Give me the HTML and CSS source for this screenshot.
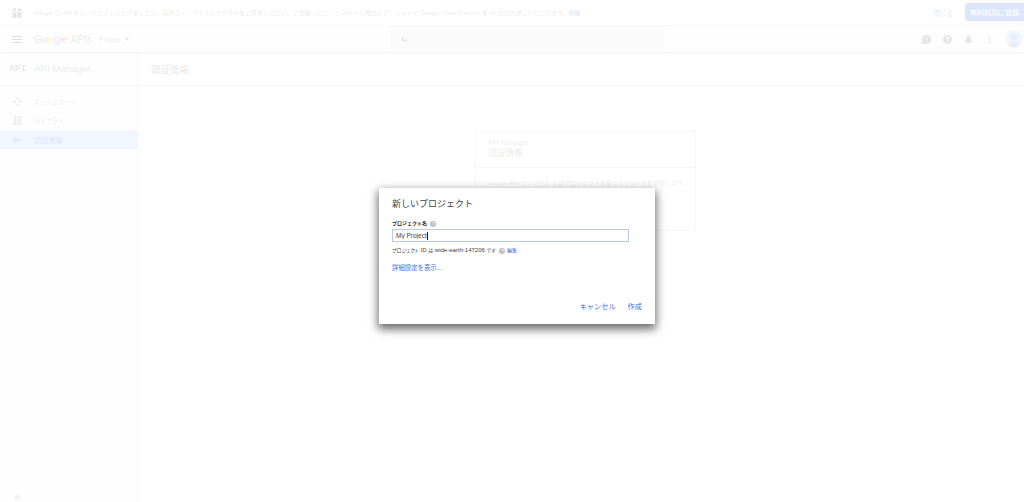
FILE: index.html
```html
<!DOCTYPE html>
<html lang="ja">
<head>
    <meta charset="UTF-8">
    <title>新しいプロジェクト</title>
    <link rel="stylesheet" href="styles.css">
</head>
<body>
    <div class="promo">
        <svg class="gift" viewBox="0 0 10 10" width="10" height="10"><path fill="#757575" d="M0 1.500h4.500V3H0zM5.500 1.500H10V3H5.500zM1.500 0h2.500v1.500H1.500zM6 0h2.500v1.500H6zM.5 4h4v6h-4zM5.500 4h4v6h-4z"/></svg>
        <p class="promo-text">Google の API を気に入っていただけましたら、実際のインフラストラクチャをご体験ください。ご登録いただくと 300 ドル相当のクレジットで Google Cloud Platform を 60 日間お試しいただけます。<a class="link" href="#">詳細</a></p>
        <a class="promo-close" href="#">閉じる</a>
        <button class="promo-btn">無料試用に登録</button>
    </div>

    <header class="topbar">
        <div class="burger"><span></span><span></span><span></span></div>
        <div class="logo"><span class="g-b">G</span><span class="g-r">o</span><span class="g-y">o</span><span class="g-b">g</span><span class="g-g">l</span><span class="g-r">e</span> <span class="logo-apis">APIs</span></div>
        <div class="project">Project <i class="caret"></i></div>
        <div class="search">
            <svg viewBox="0 0 24 24" width="9" height="9"><path fill="#757575" d="M15.500 14h-.8l-.3-.3A6.500 6.500 0 1 0 14 14.400l.3.3v.8l5 5 1.500-1.500zm-6 0a4.500 4.500 0 1 1 0-9 4.500 4.500 0 0 1 0 9z"/></svg>
        </div>
        <div class="top-icons">
            <svg viewBox="0 0 24 24" width="11" height="11"><path fill="#757575" d="M12 2a10 10 0 0 0-9 14l-1 6 6-1a10 10 0 1 0 4-19zm1 15h-2v-2h2zm0-4h-2V7h2z"/></svg>
            <svg viewBox="0 0 24 24" width="11" height="11"><path fill="#757575" d="M12 2a10 10 0 1 0 0 20 10 10 0 0 0 0-20zm1 17h-2v-2h2zm2-7-1 1c-.8.8-1 1.500-1 3h-2v-.5c0-1.100.4-2.100 1.200-2.800l1.200-1.300A2 2 0 1 0 10 9H8a4 4 0 1 1 7 3z"/></svg>
            <svg viewBox="0 0 24 24" width="11" height="11"><path fill="#757575" d="M12 22a2 2 0 0 0 2-2h-4a2 2 0 0 0 2 2zm6-6v-5c0-3-1.600-5.600-4.500-6.300V4a1.500 1.500 0 0 0-3 0v.7C7.600 5.400 6 8 6 11v5l-2 2v1h16v-1z"/></svg>
            <svg viewBox="0 0 24 24" width="11" height="11"><path fill="#757575" d="M12 8a2 2 0 1 0 0-4 2 2 0 0 0 0 4zm0 2a2 2 0 1 0 0 4 2 2 0 0 0 0-4zm0 6a2 2 0 1 0 0 4 2 2 0 0 0 0-4z"/></svg>
            <svg class="avatar" viewBox="0 0 18 18" width="18" height="18"><circle cx="9" cy="9" r="9" fill="#b7cdf9"/><circle cx="9" cy="7" r="3.400" fill="#7f9fe0"/><path fill="#7f9fe0" d="M3 15c1-3 3.500-3.800 6-3.800s5 .8 6 3.800a9 9 0 0 1-12 0z"/></svg>
        </div>
    </header>

    <div class="main">
        <aside class="sidebar">
            <div class="side-head"><span class="api-mark">API</span><span class="side-title">API Manager</span></div>
            <nav class="side-nav">
                <a class="nav-item" href="#">
                    <svg viewBox="0 0 12 12" width="9" height="9"><path fill="#8a8a8a" d="M6 0l2 2-2 2-2-2zM2 4l2 2-2 2-2-2zM10 4l2 2-2 2-2-2zM6 8l2 2-2 2-2-2z"/></svg>
                    ダッシュボード
                </a>
                <a class="nav-item" href="#">
                    <svg viewBox="0 0 12 12" width="9" height="9"><path fill="#8a8a8a" d="M1 0h3v3H1zM5 0h2v3H5zM8 0h3v3H8zM1 4h3v3H1zM5 4h2v3H5zM8 4h3v3H8zM1 8h3v4H1zM5 8h2v4H5zM8 8h3v4H8z"/></svg>
                    ライブラリ
                </a>
                <a class="nav-item nav-active" href="#">
                    <svg viewBox="0 0 12 12" width="9" height="9"><path fill="#3f74e0" d="M3 3a3 3 0 1 0 2.800 4H8v1.500h1.500V7H11V5H5.800A3 3 0 0 0 3 3zm0 2a1 1 0 1 1 0 2 1 1 0 0 1 0-2z"/></svg>
                    認証情報
                </a>
            </nav>
            <div class="collapse">
                <svg viewBox="0 0 6 6" width="6" height="6"><path fill="#9e9e9e" d="M3.500 0v6L0 3zM4.500 0H6v6H4.500z"/></svg>
            </div>
        </aside>

        <main class="content">
            <h1 class="page-title">認証情報</h1>
            <div class="content-body">
                <div class="card">
                    <div class="card-head">
                        <div class="card-sub">API Manager</div>
                        <div class="card-title">認証情報</div>
                    </div>
                    <p class="card-text">Google API コンソール ではプロジェクトを使ってリソースを管理します。</p>
                </div>
            </div>
        </main>
    </div>

    <div class="scrim">
        <div class="dialog">
            <h2 class="dialog-title">新しいプロジェクト</h2>
            <label class="field-label" for="projectName">プロジェクト名 <i class="help">?</i></label>
            <div class="input-wrap">
                <input class="field-input" id="projectName" type="text" value="My Project">
                <span class="text-caret"></span>
            </div>
            <div class="project-id"><span class="ja">プロジェクト</span> ID <span class="ja">は</span> wide-earth-147206 <span class="ja">です</span> <i class="help">?</i> <a class="edit-link" href="#">編集</a></div>
            <a class="advanced" href="#">詳細設定を表示...</a>
            <div class="dialog-actions">
                <a class="action" href="#">キャンセル</a>
                <a class="action" href="#">作成</a>
            </div>
        </div>
    </div>
</body>
</html>
```

FILE: styles.css
```css
* {
    box-sizing: border-box;
}
html, body {
    height: 100%;
}
body {
    margin: 0;
    overflow: hidden;
    font-family: "Liberation Sans", "Noto Sans CJK JP", sans-serif;
    background-color: #fff;
    color: #424242;
    display: flex;
    flex-direction: column;
}
a {
    text-decoration: none;
}
.link {
    color: #3367d6;
}

.promo {
    height: 26px;
    display: flex;
    align-items: center;
    padding-left: 12px;
    font-size: 5.950px;
    border-bottom: 1px solid #e0e0e0;
}
.promo-text {
    margin: 0 0 0 12px;
    flex: 1;
    white-space: nowrap;
    color: #8a8a8a;
}
.promo-close {
    color: #3f74e0;
    font-size: 6.500px;
    margin-right: 12px;
}
.promo-btn {
    width: 59px;
    height: 18px;
    margin-top: -1px;
    padding: 0;
    border: none;
    border-radius: 2px 0 0 2px;
    background-color: #3f74e0;
    color: #fff;
    font-family: inherit;
    font-size: 7px;
}

.topbar {
    height: 26px;
    display: flex;
    align-items: center;
    padding-left: 12px;
    background-color: #fafafa;
    box-shadow: 0 1px 2px rgba(0, 0, 0, .3);
    position: relative;
}
.burger {
    width: 10px;
    display: flex;
    flex-direction: column;
    gap: 2px;
}
.burger span {
    height: 1px;
    background-color: #424242;
}
.logo {
    margin-left: 12px;
    font-size: 10.500px;
    width: 56px;
    white-space: nowrap;
}
.g-b { color: #4285f4; }
.g-r { color: #ea4335; }
.g-y { color: #fbbc05; }
.g-g { color: #34a853; }
.logo-apis {
    color: #8a8a8a;
}
.project {
    margin-left: 9px;
    width: 122px;
    font-size: 7px;
    color: #8a8a8a;
}
.caret {
    display: inline-block;
    margin-left: 2px;
    vertical-align: middle;
    border-left: 2.500px solid transparent;
    border-right: 2.500px solid transparent;
    border-top: 3px solid #757575;
}
.search {
    width: 275px;
    height: 19px;
    margin-left: 169px;
    display: flex;
    align-items: center;
    padding-left: 11px;
    background-color: #e3e3e3;
}
.top-icons {
    margin-left: auto;
    display: flex;
    align-items: center;
    gap: 10px;
    padding-right: 1px;
}

.main {
    flex: 1;
    display: flex;
    min-height: 0;
}
.sidebar {
    width: 138px;
    background-color: #fafafa;
    border-right: 1px solid #d0d0d0;
    display: flex;
    flex-direction: column;
}
.side-head {
    height: 34px;
    display: flex;
    align-items: center;
    padding-left: 9px;
    border-bottom: 1px solid #d0d0d0;
}
.api-mark {
    width: 25px;
    font-family: "Liberation Mono", monospace;
    font-size: 9.500px;
    font-weight: bold;
    color: #757575;
}
.side-title {
    font-size: 9.700px;
    color: #8a8a8a;
}
.side-nav {
    margin-top: 6px;
}
.nav-item {
    height: 19px;
    display: flex;
    align-items: center;
    gap: 12px;
    padding-left: 13px;
    font-size: 6px;
    color: #8a8a8a;
}
.nav-active {
    background-color: #b7cdf9;
    color: #3f74e0;
    font-size: 7.200px;
}
.collapse {
    margin-top: auto;
    padding: 0 0 2px 14px;
    line-height: 6px;
}

.content {
    flex: 1;
    display: flex;
    flex-direction: column;
}
.page-title {
    height: 34px;
    margin: 0;
    display: flex;
    align-items: center;
    padding-left: 13px;
    font-size: 9.500px;
    font-weight: normal;
    color: #757575;
    border-bottom: 1px solid #d0d0d0;
}
.content-body {
    flex: 1;
    padding: 45px 0 0 337px;
}
.card {
    width: 221px;
    height: 100px;
    border: 1px solid #d0d0d0;
}
.card-head {
    height: 36px;
    padding: 7px 12px 0;
    border-bottom: 1px solid #d0d0d0;
}
.card-sub {
    font-size: 7px;
    color: #9e9e9e;
}
.card-title {
    font-size: 8.800px;
    color: #8a8a8a;
}
.card-text {
    margin: 10px 12px 0;
    font-size: 6px;
    white-space: nowrap;
    color: #9e9e9e;
}

.scrim {
    position: absolute;
    top: 0;
    left: 0;
    width: 100%;
    height: 100%;
    background-color: rgba(255, 255, 255, .82);
}
.dialog {
    position: absolute;
    left: 379px;
    top: 188px;
    width: 276px;
    height: 136px;
    padding: 9px 13px 12px;
    display: flex;
    flex-direction: column;
    background-color: #fff;
    box-shadow: 0 4px 9px 1px rgba(0, 0, 0, .6);
}
.dialog-title {
    margin: 0;
    font-size: 9px;
    line-height: 15px;
    font-weight: normal;
    color: #424242;
}
.field-label {
    margin-top: 7px;
    font-size: 5px;
    line-height: 8px;
    font-weight: bold;
    color: #212121;
}
.help {
    display: inline-block;
    width: 6px;
    height: 6px;
    margin-left: 2px;
    border-radius: 50%;
    background-color: #bdbdbd;
    color: #fff;
    font-family: "Liberation Sans", sans-serif;
    font-size: 5px;
    line-height: 6px;
    font-style: normal;
    font-weight: normal;
    text-align: center;
    vertical-align: -1px;
}
.input-wrap {
    position: relative;
    margin-top: 2px;
}
.field-input {
    display: block;
    width: 237px;
    height: 13px;
    padding: 0 3px;
    border: 1px solid #b9c9ea;
    outline: none;
    border-radius: 0;
    font-family: inherit;
    font-size: 6.500px;
    color: #424242;
}
.text-caret {
    position: absolute;
    left: 35px;
    top: 3px;
    width: 1px;
    height: 8px;
    background-color: #212121;
}
.project-id {
    margin-top: 4px;
    font-size: 6px;
    line-height: 8px;
    color: #424242;
    white-space: nowrap;
}
.ja {
    font-size: 5px;
    font-feature-settings: "palt";
}
.edit-link {
    font-size: 5px;
    color: #3367d6;
}
.advanced {
    margin-top: 9px;
    font-size: 6.400px;
    line-height: 10px;
    color: #3f74e0;
}
.dialog-actions {
    margin-top: auto;
    display: flex;
    justify-content: flex-end;
    gap: 12px;
}
.action {
    font-size: 7.200px;
    line-height: 11px;
    color: #3f74e0;
}
```
